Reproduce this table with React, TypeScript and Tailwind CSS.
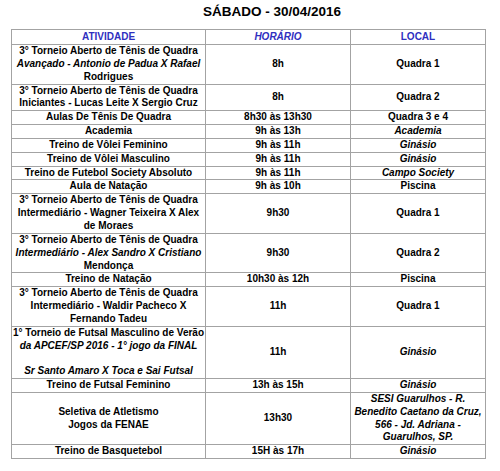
type Row = {
  atividade: string[]
  horario: string
  local: string[]
  italicAtv?: number[]
  italicLocal?: boolean
}

const rows: Row[] = [
  {
    atividade: ['3° Torneio Aberto de Tênis de Quadra', 'Avançado - Antonio de Padua X Rafael', 'Rodrigues'],
    horario: '8h',
    local: ['Quadra 1'],
    italicAtv: [1],
  },
  {
    atividade: ['3° Torneio Aberto de Tênis de Quadra', 'Iniciantes - Lucas Leite X Sergio Cruz'],
    horario: '8h',
    local: ['Quadra 2'],
  },
  { atividade: ['Aulas De Tênis De Quadra'], horario: '8h30 às 13h30', local: ['Quadra 3 e 4'] },
  { atividade: ['Academia'], horario: '9h às 13h', local: ['Academia'], italicLocal: true },
  { atividade: ['Treino de Vôlei Feminino'], horario: '9h às 11h', local: ['Ginásio'], italicLocal: true },
  { atividade: ['Treino de Vôlei Masculino'], horario: '9h às 11h', local: ['Ginásio'], italicLocal: true },
  {
    atividade: ['Treino de Futebol Society Absoluto'],
    horario: '9h às 11h',
    local: ['Campo Society'],
    italicLocal: true,
  },
  { atividade: ['Aula de Natação'], horario: '9h às 10h', local: ['Piscina'] },
  {
    atividade: ['3° Torneio Aberto de Tênis de Quadra', 'Intermediário - Wagner Teixeira X Alex', 'de Moraes'],
    horario: '9h30',
    local: ['Quadra 1'],
  },
  {
    atividade: ['3° Torneio Aberto de Tênis de Quadra', 'Intermediário - Alex Sandro X Cristiano', 'Mendonça'],
    horario: '9h30',
    local: ['Quadra 2'],
    italicAtv: [1],
  },
  { atividade: ['Treino de Natação'], horario: '10h30 às 12h', local: ['Piscina'] },
  {
    atividade: ['3° Torneio Aberto de Tênis de Quadra', 'Intermediário - Waldir Pacheco X', 'Fernando Tadeu'],
    horario: '11h',
    local: ['Quadra 1'],
  },
  {
    atividade: [
      '1° Torneio de Futsal Masculino de Verão',
      'da APCEF/SP 2016 - 1° jogo da FINAL',
      '',
      'Sr Santo Amaro X Toca e Sai Futsal',
    ],
    horario: '11h',
    local: ['Ginásio'],
    italicAtv: [1, 3],
    italicLocal: true,
  },
  { atividade: ['Treino de Futsal Feminino'], horario: '13h às 15h', local: ['Ginásio'], italicLocal: true },
  {
    atividade: ['Seletiva de Atletismo', 'Jogos da FENAE'],
    horario: '13h30',
    local: ['SESI Guarulhos - R.', 'Benedito Caetano da Cruz,', '566 - Jd. Adriana -', 'Guarulhos, SP.'],
    italicLocal: true,
  },
  { atividade: ['Treino de Basquetebol'], horario: '15H às 17h', local: ['Ginásio'], italicLocal: true },
]

const cell = 'border border-[#a3a3a3] p-0 text-center align-middle'

function Lines({ lines, italic }: { lines: string[]; italic?: (i: number) => boolean }) {
  return (
    <>
      {lines.map((l, i) => (
        <div key={i} className={`whitespace-nowrap ${italic && italic(i) ? 'italic' : ''}`}>
          {l || '\u00a0'}
        </div>
      ))}
    </>
  )
}

export default function App() {
  return (
    <div className="min-h-[471px] w-[500px] bg-white font-['Liberation_Sans',Arial,sans-serif] text-black">
      <div className="ml-[11px] w-[474px]">
        <h1 className="flex h-[29px] items-center justify-center pb-[5px] pl-[48px] text-[13.5px] font-bold">
          SÁBADO - 30/04/2016
        </h1>
        <table className="w-[474px] table-fixed border-collapse border border-[#8a8a8a] text-[10px] font-bold leading-[12.85px]">
          <colgroup>
            <col className="w-[194px]" />
            <col className="w-[145px]" />
            <col className="w-[135px]" />
          </colgroup>
          <thead>
            <tr className="text-[#2f2fbf]">
              <th className={`${cell} h-[15px]`}>ATIVIDADE</th>
              <th className={`${cell} italic`}>HORÁRIO</th>
              <th className={cell}>LOCAL</th>
            </tr>
          </thead>
          <tbody>
            {rows.map((r, i) => (
              <tr key={i}>
                <td className={cell}>
                  <Lines lines={r.atividade} italic={(n) => !!r.italicAtv?.includes(n)} />
                </td>
                <td className={cell}>{r.horario}</td>
                <td className={cell}>
                  <Lines lines={r.local} italic={() => !!r.italicLocal} />
                </td>
              </tr>
            ))}
          </tbody>
        </table>
      </div>
    </div>
  )
}
